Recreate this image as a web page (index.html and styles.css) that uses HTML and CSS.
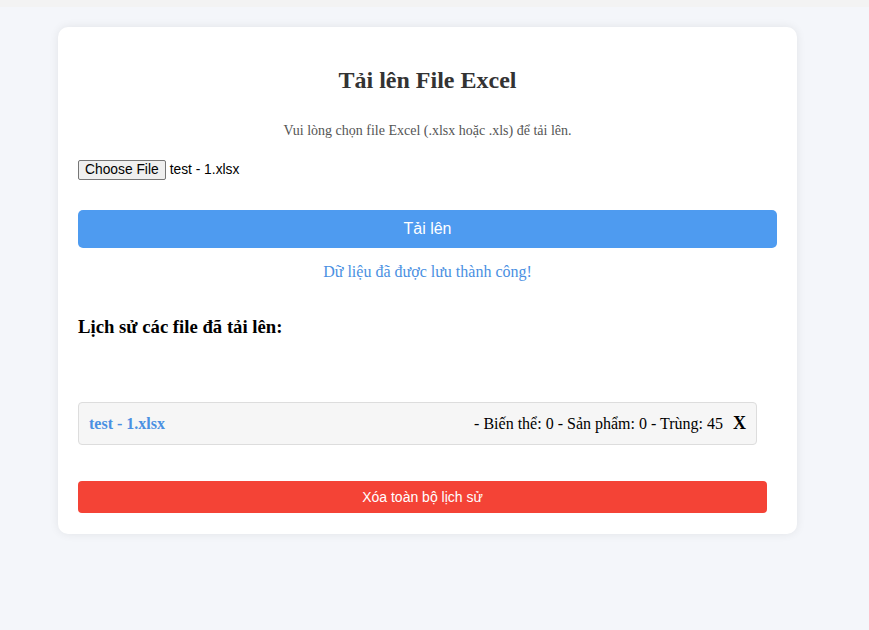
FILE: index.html
```html
<!DOCTYPE html>
<html lang="vi">
<head>
<meta charset="utf-8">
<title>Tải lên File Excel</title>
<link rel="stylesheet" href="styles.css">
</head>
<body>
<div class="topbar"></div>
<div class="page">
  <div class="card">
    <h1 class="title">Tải lên File Excel</h1>
    <p class="subtitle">Vui lòng chọn file Excel (.xlsx hoặc .xls) để tải lên.</p>
    <div class="file-row">
      <span class="file-btn">Choose File</span>
      <span class="file-name">test - 1.xlsx</span>
    </div>
    <button class="upload-btn">Tải lên</button>
    <p class="success">Dữ liệu đã được lưu thành công!</p>
    <h3 class="history-title">Lịch sử các file đã tải lên:</h3>
    <ul class="history">
      <li class="history-item">
        <span class="item-name">test - 1.xlsx</span>
        <span class="item-info">- Biến thể: 0 - Sản phẩm: 0 - Trùng: 45 <span class="item-del">X</span></span>
      </li>
    </ul>
    <button class="clear-btn">Xóa toàn bộ lịch sử</button>
  </div>
</div>
</body>
</html>
```
FILE: styles.css
```css
html, body {
  margin: 0;
  padding: 0;
}
body {
  background: #f4f6fa;
  font-family: "Liberation Serif", "Times New Roman", serif;
  min-height: 630px;
}
.topbar {
  height: 7px;
  background: #f3f3f3;
}
.page {
  padding: 20px 0 0 58px;
}
.card {
  width: 699px;
  background: #fff;
  border-radius: 10px;
  box-shadow: 0 0 10px rgba(0, 0, 0, 0.08);
  padding: 20px 20px 21px;
  box-sizing: content-box;
}
.title {
  margin: 19px 0 0;
  text-align: center;
  font-size: 24px;
  line-height: 28px;
  color: #333;
  font-weight: bold;
}
.subtitle {
  margin: 28px 0 0;
  text-align: center;
  font-size: 14px;
  line-height: 18px;
  color: #555;
}
.file-row {
  margin-top: 19px;
  display: flex;
  align-items: center;
  font-family: "Liberation Sans", Arial, sans-serif;
  font-size: 13.8px;
  height: 21px;
}
.file-btn {
  display: inline-block;
  box-sizing: border-box;
  height: 20px;
  line-height: 18px;
  padding: 0 6px;
  border: 1px solid #767676;
  border-radius: 2px;
  background: #efefef;
  color: #000;
  margin-right: 4px;
}
.file-name {
  color: #000;
}
.upload-btn {
  display: block;
  width: 100%;
  margin-top: 30px;
  height: 38px;
  border: none;
  border-radius: 5px;
  background: #4e9bf0;
  color: #fff;
  font-family: "Liberation Sans", Arial, sans-serif;
  font-size: 16px;
}
.success {
  margin: 15px 0 0;
  text-align: center;
  color: #4a90e2;
  font-size: 16px;
  line-height: 18px;
}
.history-title {
  margin: 35px 0 0;
  font-size: 18.72px;
  line-height: 22px;
  font-weight: bold;
  color: #000;
}
.history {
  list-style: none;
  margin: 64px 0 0;
  padding: 0;
}
.history-item {
  width: 679px;
  box-sizing: border-box;
  height: 43px;
  display: flex;
  align-items: center;
  justify-content: space-between;
  padding: 0 10px;
  background: #f6f6f6;
  border: 1px solid #ddd;
  border-radius: 4px;
}
.item-name {
  color: #4a90e2;
  font-weight: bold;
  font-size: 16px;
}
.item-info {
  font-size: 16px;
  color: #000;
}
.item-del {
  font-weight: bold;
  font-size: 18px;
  margin-left: 6px;
}
.clear-btn {
  display: block;
  width: 689px;
  margin-top: 36px;
  height: 32px;
  border: none;
  border-radius: 4px;
  background: #f44336;
  color: #fff;
  font-family: "Liberation Sans", Arial, sans-serif;
  font-size: 14px;
}
```
